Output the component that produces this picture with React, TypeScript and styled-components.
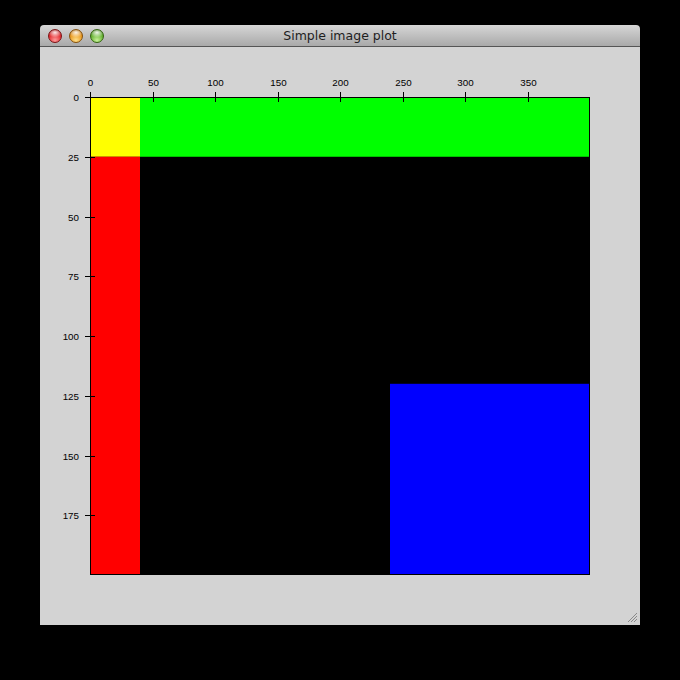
import styled, { createGlobalStyle } from "styled-components";

const GlobalStyle = createGlobalStyle`
    html, body {
        margin: 0;
        padding: 0;
        background: #000;
    }
    #root {
        width: 680px;
        height: 680px;
        background: #000;
        overflow: hidden;
    }
`;

const Window = styled.div`
    margin-left: 40px;
    padding-top: 25px;
    width: 600px;
`;

const TitleBar = styled.div`
    position: relative;
    height: 21px;
    border-radius: 4px 4px 0 0;
    border-bottom: 1px solid #555;
    background: linear-gradient(#d6d6d6, #a9a9a9);
    display: flex;
    align-items: center;
    justify-content: center;
`;

const Lights = styled.div`
    position: absolute;
    left: 8px;
    top: 4px;
    display: flex;
    gap: 7px;
`;

const Light = styled.div<{ $base: string; $dark: string; $glow: string }>`
    width: 14px;
    height: 14px;
    box-sizing: border-box;
    border-radius: 50%;
    border: 1px solid ${(p) => p.$dark};
    background:
        radial-gradient(ellipse 60% 40% at 50% 22%, rgba(255, 255, 255, 0.9) 0, rgba(255, 255, 255, 0) 100%),
        radial-gradient(circle at 50% 85%, ${(p) => p.$glow} 0, ${(p) => p.$base} 60%, ${(p) => p.$dark} 100%);
`;

const Title = styled.span`
    font-family: "DejaVu Sans", "Liberation Sans", sans-serif;
    font-size: 12.5px;
    color: #1e1e1e;
    line-height: 21px;
`;

const Content = styled.div`
    position: relative;
    height: 578px;
    background: #d3d3d3;
    padding: 20px 0 0 20px;
    box-sizing: border-box;
`;

const Grip = styled.svg`
    position: absolute;
    right: 2px;
    bottom: 2px;
`;

const X0 = 30;
const Y0 = 30;
const SX = 1.25;
const SY = 2.39;

const px = (u: number) => X0 + u * SX;
const py = (v: number) => Y0 + v * SY;

const blocks = [
    { x: 0, y: 0, w: 400, h: 200, fill: "#000000" },
    { x: 0, y: 0, w: 40, h: 25, fill: "#ffff00" },
    { x: 40, y: 0, w: 360, h: 25, fill: "#00ff00" },
    { x: 0, y: 25, w: 40, h: 175, fill: "#ff0000" },
    { x: 240, y: 120, w: 160, h: 80, fill: "#0000ff" },
];

const xTicks = [0, 50, 100, 150, 200, 250, 300, 350];
const yTicks = [0, 25, 50, 75, 100, 125, 150, 175];

const ImagePlot = () => (
    <svg width={560} height={530} style={{ display: "block" }}>
        {blocks.map((b, i) => (
            <rect
                key={i}
                x={px(b.x)}
                y={py(b.y)}
                width={b.w * SX}
                height={b.h * SY}
                fill={b.fill}
            />
        ))}
        <rect x={X0 + 0.5} y={Y0 + 0.5} width={499} height={477} fill="none" stroke="#000" />
        <g stroke="#000" strokeWidth={1}>
            {xTicks.map((t) => {
                const x = Math.round(px(t)) + 0.5;
                return <line key={t} x1={x} x2={x} y1={Y0 - 5} y2={Y0 + 5} />;
            })}
            {yTicks.map((t) => {
                const y = Math.round(py(t)) + 0.5;
                return <line key={t} x1={X0 - 5} x2={X0 + 5} y1={y} y2={y} />;
            })}
        </g>
        <g fontFamily="'Liberation Sans', Arial, sans-serif" fontSize={9.8} fill="#000">
            {xTicks.map((t) => (
                <text key={t} x={Math.round(px(t)) + 0.5} y={Y0 - 11} textAnchor="middle">
                    {t}
                </text>
            ))}
            {yTicks.map((t) => (
                <text key={t} x={X0 - 11} y={Math.round(py(t)) + 4} textAnchor="end">
                    {t}
                </text>
            ))}
        </g>
    </svg>
);

const App = () => {
    return (
        <>
            <GlobalStyle />
            <Window>
                <TitleBar>
                    <Lights>
                        <Light $base="#e0262a" $dark="#7a1214" $glow="#ff9a9a" />
                        <Light $base="#e8951a" $dark="#85500a" $glow="#ffe08a" />
                        <Light $base="#5fae2c" $dark="#33640f" $glow="#c8f29a" />
                    </Lights>
                    <Title>Simple image plot</Title>
                </TitleBar>
                <Content>
                    <ImagePlot />
                    <Grip width={11} height={11}>
                        <g stroke="#8a8a8a" strokeWidth={1}>
                            <line x1={1} y1={10} x2={10} y2={1} />
                            <line x1={4} y1={10} x2={10} y2={4} />
                            <line x1={7} y1={10} x2={10} y2={7} />
                        </g>
                    </Grip>
                </Content>
            </Window>
        </>
    );
};

export default App;
